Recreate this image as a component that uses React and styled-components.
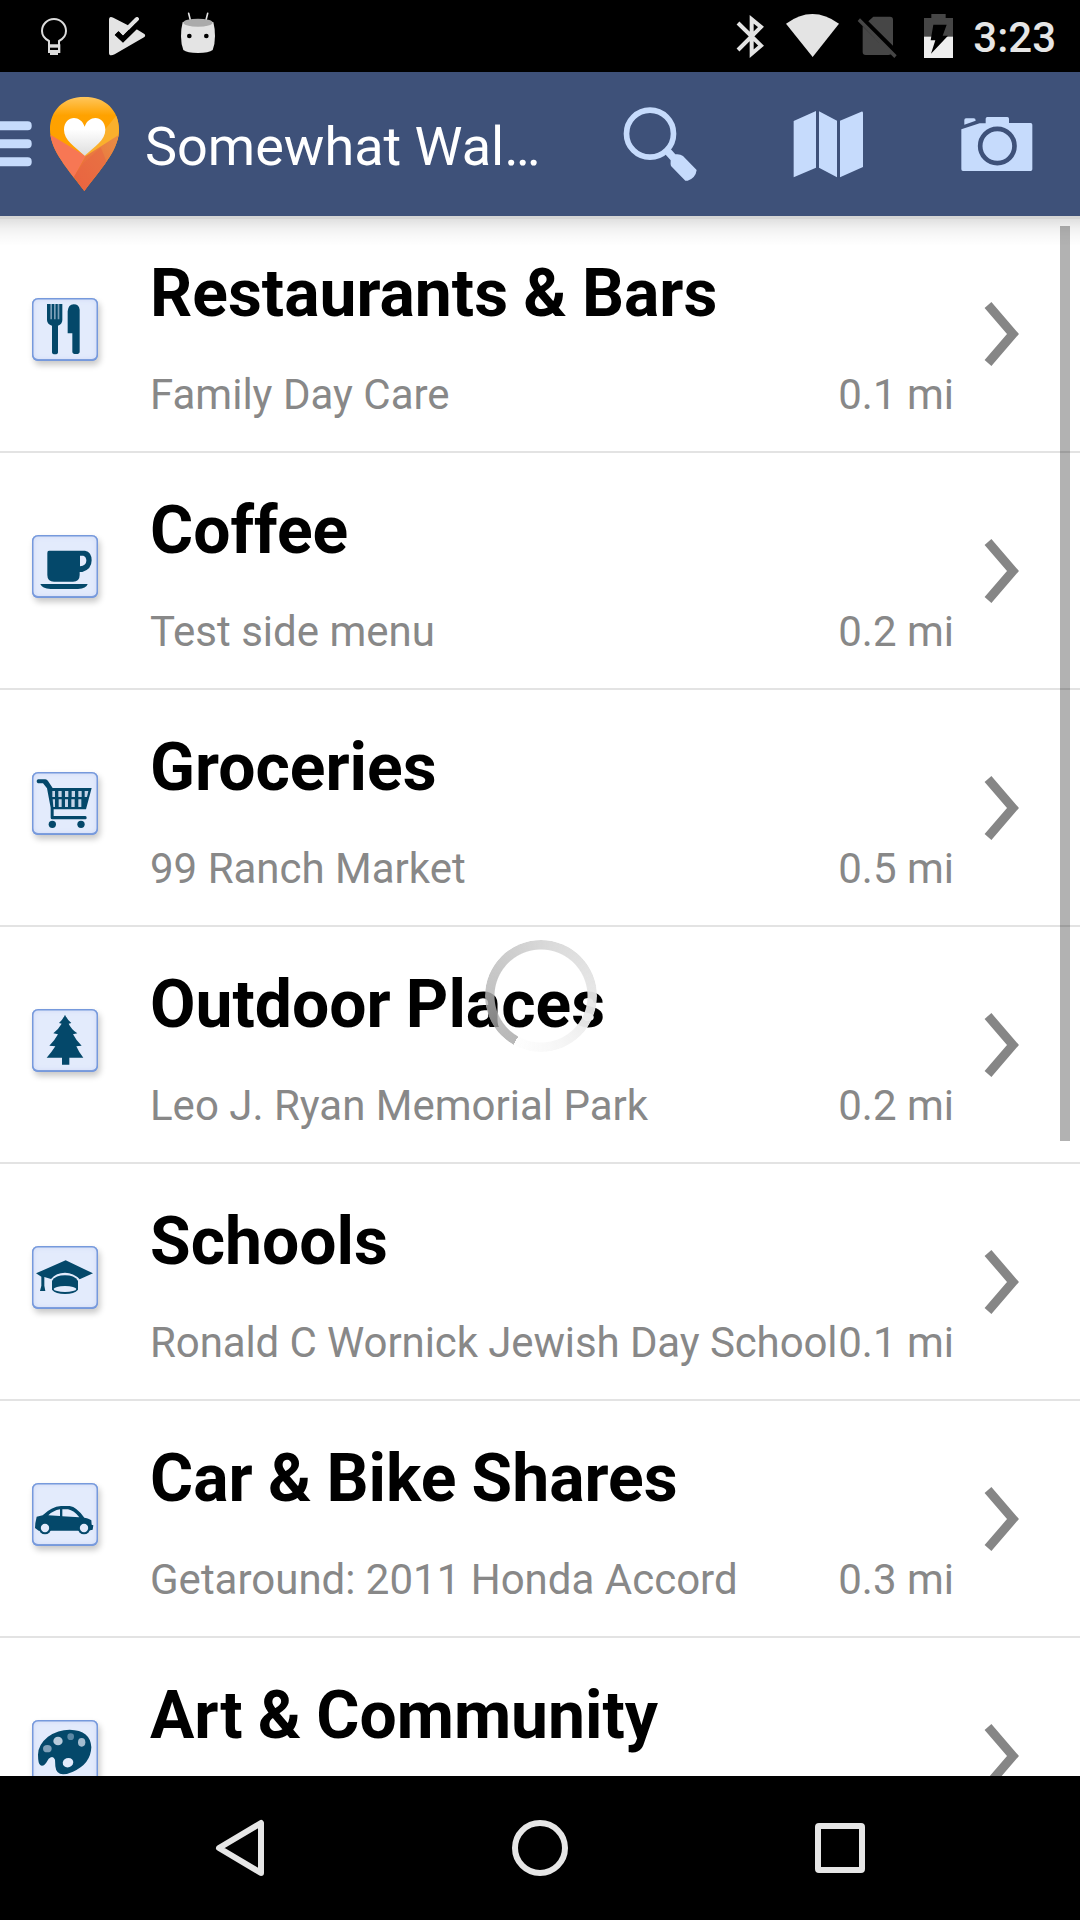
import React from "react";
import styled, { createGlobalStyle } from "styled-components";

const GlobalStyle = createGlobalStyle`
  *, *::before, *::after { box-sizing: border-box; }
  html, body { margin: 0; padding: 0; background: #000; }
  body { font-family: Roboto, "Noto Sans", sans-serif; overflow: hidden; }
  svg { display: block; flex: none; }
`;

const Screen = styled.div`
  position: relative;
  display: flex;
  flex-direction: column;
  width: 1080px;
  height: 1920px;
  overflow: hidden;
  background: #fff;
`;

const StatusBar = styled.div`
  flex: none;
  height: 72px;
  background: #000;
  display: flex;
  justify-content: space-between;
  padding: 0 24px 0 36px;
`;

const StatusGroup = styled.div`
  display: flex;
  align-items: flex-start;
`;

const Clock = styled.span`
  margin-left: 20px;
  padding-top: 13px;
  font-size: 42px;
  line-height: 49px;
  font-weight: 500;
  color: #e6e6e6;
  white-space: nowrap;
`;

const Header = styled.header`
  flex: none;
  height: 144px;
  background: #3e5179;
  display: flex;
  align-items: flex-start;
`;

const HeaderTitle = styled.h1`
  margin: 0 0 0 25px;
  padding-top: 43px;
  width: 410px;
  font-size: 54px;
  line-height: 63px;
  font-weight: 400;
  color: #fff;
  white-space: nowrap;
`;

const Actions = styled.div`
  flex: 1;
  display: flex;
`;

const List = styled.main`
  position: relative;
  flex: 1;
  min-height: 0;
  overflow: hidden;
  background: #fff;
`;

const HeaderShadow = styled.div`
  position: absolute;
  inset: 0 0 auto 0;
  height: 30px;
  background: linear-gradient(
    rgba(0, 0, 0, 0.165) 0 3px,
    rgba(0, 0, 0, 0.12) 3px,
    rgba(0, 0, 0, 0.06) 12px,
    rgba(0, 0, 0, 0.025) 21px,
    transparent 30px
  );
`;

const ScrollThumb = styled.div`
  position: absolute;
  top: 10px;
  right: 10px;
  width: 10px;
  height: 915px;
  background: rgba(0, 0, 0, 0.302);
`;

const Row = styled.div`
  display: flex;
  align-items: flex-start;
  height: 237px;
  padding-left: 32px;
  border-bottom: 2px solid #e3e3e3;
`;

const Tile = styled.div`
  flex: none;
  width: 66px;
  height: 63px;
  margin-top: 82px;
  border-radius: 6px;
  background: #e3ebfc;
  box-shadow:
    inset 0 0 0 1.5px #7699dc,
    inset 0 -1px 0 1px #84a3de,
    inset 0 0 5px 2px #d2dcf6,
    2px 4px 6px rgba(0, 0, 0, 0.22);
`;

const RowText = styled.div`
  width: 804px;
  margin-left: 52px;
  padding-top: 39px;
`;

const RowTitle = styled.h2`
  margin: 0;
  font-size: 66px;
  line-height: 77px;
  font-weight: 700;
  word-spacing: -1.2px;
  color: #000;
  white-space: nowrap;
`;

const RowDetail = styled.div`
  display: flex;
  justify-content: space-between;
  margin-top: 38px;
  font-size: 42px;
  line-height: 49px;
  color: #888;
  white-space: nowrap;
`;

const PlaceName = styled.span`
  letter-spacing: ${(p) => (p.$tight ? "-0.1px" : "normal")};
`;

const Chevron = styled.svg`
  margin: 83px 0 0 29px;
`;

const Spinner = styled.div`
  position: absolute;
  left: 484.5px;
  top: 724px;
  width: 112px;
  height: 112px;
  border-radius: 50%;
  background: conic-gradient(
    from 209.5deg,
    rgba(159, 159, 159, 0.74) 0deg,
    rgba(190, 190, 190, 0.85) 90deg,
    rgba(215, 215, 215, 0.9) 165deg,
    rgba(230, 230, 230, 0.95) 240deg,
    rgba(248, 248, 248, 0.97) 320deg,
    rgba(254, 254, 254, 1) 360deg
  );
  mask: radial-gradient(circle at center, transparent 46px, #000 47px);
`;

const NavBar = styled.nav`
  flex: none;
  height: 144px;
  background: #000;
  display: flex;
  align-items: center;
  justify-content: center;
  gap: 240px;
`;

const INK = "#04486a";
const PALE = "#c6dbfc";
const LIGHT = "#e4e4e4";

/* Tile glyphs use a 198 x 189 drawing area, three units per pixel. */
const glyphs = {
  food: (
    <g transform="translate(-96 -84)">
      <path fill={INK} d="M141 102h46v48q0 12-13 17v80q0 6-9 6t-9-6v-80q-15-5-15-17z" />
      <path fill="#7d9fb8" d="M151 102h5v46h-5zM162 102h5v46h-5zM173 102h5v46h-5z" />
      <path fill={INK} d="M203 190v-66q2-21 18-21 16 0 18 16v126q0 7-11 7t-11-7v-55z" />
    </g>
  ),
  coffee: (
    <g transform="translate(-96 -105)" fill={INK}>
      <path d="M147 152h108q20 4 20 29 0 27-28 35h-8v9q0 20-20 20h-57q-20 0-20-20v-66q0-7 5-7z" />
      <path fill="#e3ebfc" d="M240 167h10q9 3 9 15 0 14-19 17z" />
      <path d="M121 252h142q-4 13-29 15h-82q-26-2-31-15z" />
    </g>
  ),
  cart: (
    <g transform="translate(-96 -97)">
      <path fill={INK} d="M114 119h22q5 0 8 5l14 21h117l-17 64h-97v20h95q4 0 4 5t-4 5h-99q-5 0-5-5v-30l-11-58-12-15h-15q-4-2-4-6t4-6z" />
      <path fill="#c5d4e8" d="M157 154h8v18h-8zM175 154h10v18h-10zM195 154h10v18h-10zM215 154h10v18h-10zM235 154h10v18h-10zM254 154h11l-4 18h-7zM158 179h7v23h-5zM176 179h9v23h-9zM195 179h9v23h-9zM214 179h10v23h-10zM235 179h9v23h-9z" />
      <circle fill={INK} cx="157" cy="254" r="11" />
      <circle fill={INK} cx="243" cy="254" r="11" />
    </g>
  ),
  tree: (
    <path
      transform="translate(-96 -88)"
      fill={INK}
      d="M195 105q6 14 19 25l-8 2q8 17 26 29l-13 3q9 18 26 34l-16 2q7 17 21 34h-42v21h-22v-21h-46q14-15 26-34l-18-2q16-15 26-34l-14-3q15-12 25-29l-8-2q12-11 18-25z"
    />
  ),
  school: (
    <g transform="translate(-96 -79)">
      <path fill={INK} d="M197 122l82 39-40 18q-18-20-44-20t-42 19l-20-6v26l3 16h-16l4-16v-27l-16-10z" />
      <path fill={INK} d="M156 183q11-16 39-16t39 16v27q-11 13-39 13t-39-13z" />
      <ellipse fill="#e3ebfc" cx="195" cy="208" rx="34" ry="9" />
    </g>
  ),
  car: (
    <g transform="translate(-96 -70)">
      <path fill={INK} d="M105 205l1-14 4-20 18-4q26-26 55-28h26q21 3 44 35 17 3 21 8l1 13 5 2-2 13-14 3H116z" />
      <path fill="#e3ebfc" d="M145 167q14-14 35-18v20zM187 149h17q18 3 34 24l-51-3z" />
      <circle fill={INK} cx="135" cy="205" r="19" />
      <circle fill={INK} cx="252" cy="205" r="19" />
      <circle fill="#e3ebfc" cx="135" cy="205" r="12.5" />
      <circle fill="#e3ebfc" cx="252" cy="205" r="12.5" />
    </g>
  ),
  palette: (
    <g transform="translate(-96 -91)">
      <path fill={INK} d="M114 195q0-30 30-54 30-21 65-21 63 2 65 53-2 50-55 73-49 22-53-16l-1-20q-6-15-19-3-7 13-14 20-12 5-16-9-2-10-2-23z" />
      <ellipse fill="#e3ebfc" cx="204" cy="219" rx="16" ry="14" transform="rotate(-20 204 219)" />
      <ellipse fill="#7fa0b8" cx="142" cy="177" rx="13" ry="11" />
      <ellipse fill="#b7cbdc" cx="174" cy="154" rx="14" ry="13" />
      <circle fill="#5c88a4" cx="212" cy="141" r="10" />
      <ellipse fill="#a4bdd0" cx="245" cy="158" rx="11" ry="13" />
    </g>
  ),
};

const places = [
  { glyph: "food", title: "Restaurants & Bars", name: "Family Day Care", distance: "0.1 mi" },
  { glyph: "coffee", title: "Coffee", name: "Test side menu", distance: "0.2 mi" },
  { glyph: "cart", title: "Groceries", name: "99 Ranch Market", distance: "0.5 mi" },
  { glyph: "tree", title: "Outdoor Places", name: "Leo J. Ryan Memorial Park", distance: "0.2 mi" },
  { glyph: "school", title: "Schools", name: "Ronald C Wornick Jewish Day School", distance: "0.1 mi", tight: true },
  { glyph: "car", title: "Car & Bike Shares", name: "Getaround: 2011 Honda Accord", distance: "0.3 mi" },
  { glyph: "palette", title: "Art & Community", name: "", distance: "" },
];

function NotificationIcons() {
  return (
    <svg width="190" height="72" viewBox="108 0 570 216">
      <path
        d="M147 135v-12q-21-11-21-30a36 36 0 0 1 72 0q0 19-21 30v12"
        fill="none"
        stroke="#dcdcdc"
        strokeWidth="6"
      />
      <path fill="#dcdcdc" d="M144 133h37v26h-7v6h-24v-6h-6z" />
      <path fill="#000" d="M150 143h24v7h-24z" />
      <path fill={LIGHT} d="M327 60q0-14 13-7l44 23 22-23q6-4 9 0 4 4 0 8l-46 46-14-13-11 11 25 23 41-40 22 13q7 5 0 11l-88 51q-17 8-17-5z" />
      <path fill="#000" d="M345 104l11-10 13 13 37-37 14 7-12 12-39 38z" />
      <path fill={LIGHT} d="M384 76l23-23q5-3 8 0 4 4 0 8l-28 28z" />
      <path d="M566 40l6 24M623 40l-6 24" stroke={LIGHT} strokeWidth="5" strokeLinecap="round" />
      <path fill={LIGHT} d="M548 66h92q5 20 5 42 0 24-7 42-11 9-44 9t-44-9q-7-18-7-42 0-22 5-42z" />
      <ellipse fill="#ababab" cx="594" cy="68" rx="44" ry="12" />
      <circle cx="568" cy="108" r="7" />
      <circle cx="619" cy="108" r="7" />
    </svg>
  );
}

function SystemIcons() {
  return (
    <svg width="220" height="72" viewBox="96 0 660 216">
      <path
        d="M111 69l69 68-28 24V58l28 23-69 69"
        fill="none"
        stroke={LIGHT}
        strokeWidth="12"
      />
      <path fill={LIGHT} d="M255 71q79-58 159 0l-79 100z" />
      <path fill="#464646" d="M517 50h50q9 0 9 9v78l-74-73zM485 79l84 84q-3 2-7 2h-68q-9 0-9-9zM477 55l110 111-7 8L470 63z" />
      <path fill="#464646" d="M691 42h43v12h22v57h-87V54h22z" />
      <path fill="#eee" d="M669 110h87v64h-87z" />
      <path d="M697 74h40l-12 33h16l-51 54 13-40h-14z" />
    </svg>
  );
}

function MenuAndPin() {
  return (
    <svg width="120" height="144" viewBox="0 216 360 432">
      <defs>
        <linearGradient id="pinTop" x1="0" y1="0" x2="0" y2="1">
          <stop offset="0" stopColor="#ffc75f" />
          <stop offset="0.1" stopColor="#ffb52f" />
          <stop offset="0.2" stopColor="#ffa200" />
          <stop offset="1" stopColor="#ff9d00" />
        </linearGradient>
        <linearGradient id="pinRight" x1="1" y1="0" x2="0" y2="1">
          <stop offset="0" stopColor="#e99045" />
          <stop offset="1" stopColor="#ea5e3c" />
        </linearGradient>
        <linearGradient id="heart" x1="0" y1="0" x2="0" y2="1">
          <stop offset="0.3" stopColor="#fff" />
          <stop offset="1" stopColor="#dedede" />
        </linearGradient>
        <clipPath id="pinShape">
          <path d="M253 290c64 0 104 42 104 98 0 56-39 102-104 185-65-83-103-129-103-185 0-56 40-98 103-98z" />
        </clipPath>
      </defs>
      <g fill={PALE}>
        <rect x="-20" y="364" width="115" height="27" rx="12" />
        <rect x="-20" y="418" width="115" height="27" rx="12" />
        <rect x="-20" y="472" width="115" height="27" rx="12" />
      </g>
      <g clipPath="url(#pinShape)">
        <rect x="149" y="289" width="210" height="286" fill="url(#pinTop)" />
        <path fill="#fab02c" d="M359 335v80l-100 60-10-8z" />
        <path fill="#f77754" d="M149 403l108 65-34 62v50h-74z" />
        <path fill="url(#pinRight)" d="M359 403l-102 65-35 62 30 50h107z" />
        <path fill="#e86643" d="M254 487l-32 43 30 50h10l60-88-20-50z" opacity="0.55" />
      </g>
      <path fill="url(#heart)" d="M254 467c-30-28-62-46-62-78 0-42 49-48 62-9 13-39 62-33 62 9 0 32-32 50-62 78z" />
    </svg>
  );
}

function HeaderActions() {
  return (
    <Actions>
      <svg width="168" height="144" viewBox="-75 0 504 432">
        <circle cx="210" cy="185" r="70.5" fill="none" stroke={PALE} strokeWidth="17" />
        <path fill={PALE} d="M253 244l17-15 16 18q14-2 23 5l41 42q-3 24-27 32h-7l-43-44q-2-6-1-17z" />
      </svg>
      <svg width="168" height="144" viewBox="429 0 504 432">
        <path fill={PALE} d="M641 147l67-30v170l-67 29zM717 118l54 28v170l-54-29zM780 146l64-27q5-1 5 4v162l-69 31z" />
      </svg>
      <svg width="168" height="144" viewBox="933 0 504 432">
        <path fill={PALE} d="M1144 172l55-18h18v-14q0-5 5-5h60q5 0 5 5v13h65q5 0 5 5v134q0 5-5 5h-203q-5 0-5-5z" />
        <path fill={PALE} d="M1153 158v-14q0-5 5-5h23q6 0 6 7z" />
        <circle cx="1252" cy="222" r="51.5" fill="none" stroke="#3e5179" strokeWidth="14" />
      </svg>
    </Actions>
  );
}

export default function App() {
  return (
    <Screen>
      <GlobalStyle />
      <StatusBar>
        <StatusGroup>
          <NotificationIcons />
        </StatusGroup>
        <StatusGroup>
          <SystemIcons />
          <Clock>3:23</Clock>
        </StatusGroup>
      </StatusBar>
      <Header>
        <MenuAndPin />
        <HeaderTitle>Somewhat Wal…</HeaderTitle>
        <HeaderActions />
      </Header>
      <List>
        {places.map((p) => (
          <Row key={p.title}>
            <Tile>
              <svg width="66" height="63" viewBox="0 0 198 189">
                {glyphs[p.glyph]}
              </svg>
            </Tile>
            <RowText>
              <RowTitle>{p.title}</RowTitle>
              <RowDetail>
                <PlaceName $tight={p.tight}>{p.name}</PlaceName>
                <span>{p.distance}</span>
              </RowDetail>
            </RowText>
            <Chevron width="40" height="70" viewBox="0 0 40 70">
              <path d="M5 6l25 29L5 64" fill="none" stroke="#868686" strokeWidth="9" />
            </Chevron>
          </Row>
        ))}
        <HeaderShadow />
        <ScrollThumb />
        <Spinner />
      </List>
      <NavBar>
        <svg width="60" height="60" viewBox="0 0 60 60">
          <path d="M51 5v50L9 30z" fill="none" stroke="#e6e6e6" strokeWidth="6" strokeLinejoin="round" />
        </svg>
        <svg width="60" height="60" viewBox="0 0 60 60">
          <circle cx="30" cy="30" r="25" fill="none" stroke="#e6e6e6" strokeWidth="6" />
        </svg>
        <svg width="60" height="60" viewBox="0 0 60 60">
          <rect x="8" y="8" width="44" height="44" rx="1" fill="none" stroke="#e6e6e6" strokeWidth="6" strokeLinejoin="round" />
        </svg>
      </NavBar>
    </Screen>
  );
}
